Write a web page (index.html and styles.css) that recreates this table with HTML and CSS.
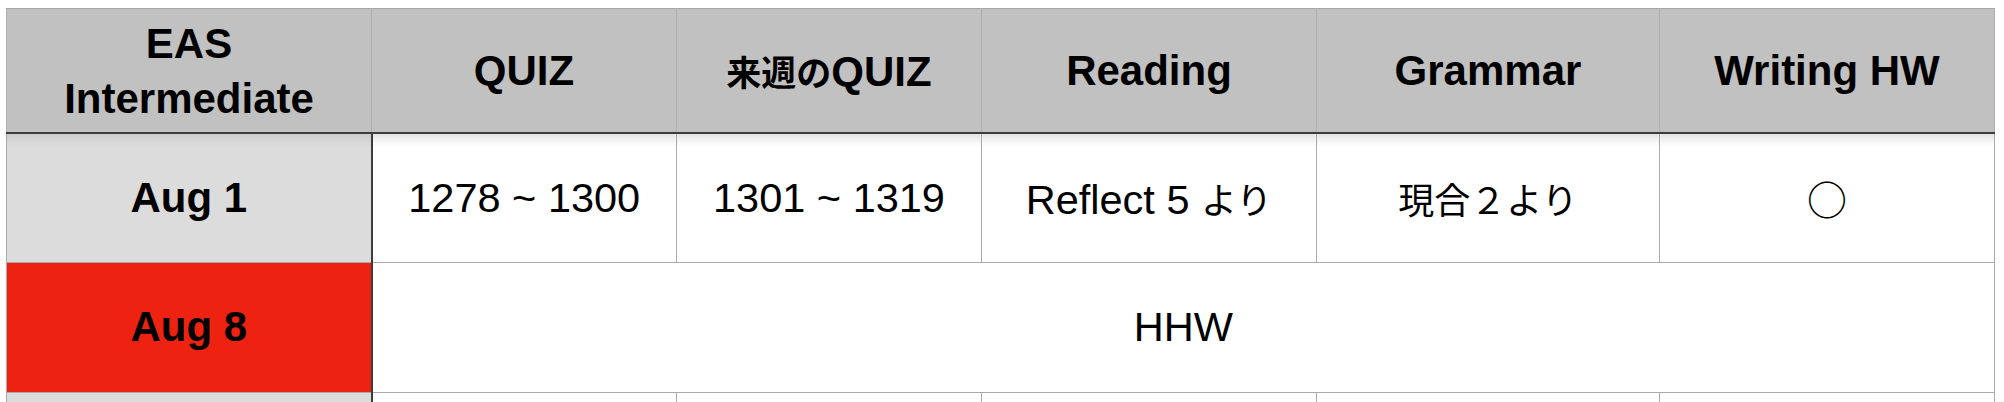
FILE: index.html
```html
<!DOCTYPE html>
<html lang="ja">
<head>
<meta charset="utf-8">
<title>EAS Intermediate</title>
<link rel="stylesheet" href="styles.css">
</head>
<body>
<table class="sched">
  <colgroup>
    <col class="c1"><col class="c2"><col class="c3"><col class="c4"><col class="c5"><col class="c6">
  </colgroup>
  <thead>
    <tr>
      <th class="corner">EAS<br>Intermediate</th>
      <th>QUIZ</th>
      <th><span class="ja">来週の</span>QUIZ</th>
      <th>Reading</th>
      <th>Grammar</th>
      <th>Writing HW</th>
    </tr>
  </thead>
  <tbody>
    <tr class="r1">
      <th class="date gray">Aug 1</th>
      <td>1278 ~ 1300</td>
      <td>1301 ~ 1319</td>
      <td>Reflect 5 <span class="ja">より</span></td>
      <td><span class="ja">現合２より</span></td>
      <td><span class="ja mark">○</span></td>
    </tr>
    <tr class="r2">
      <th class="date red">Aug 8</th>
      <td colspan="5">HHW</td>
    </tr>
    <tr class="r3">
      <th class="date gray"></th>
      <td></td><td></td><td></td><td></td><td></td>
    </tr>
  </tbody>
</table>
</body>
</html>
```
FILE: styles.css
```css
html, body {
  margin: 0;
  background: #ffffff;
}
body {
  font-family: "Liberation Sans", "Noto Sans CJK JP", sans-serif;
  color: #000;
}
.sched {
  border-collapse: collapse;
  table-layout: fixed;
  margin: 8px 0 0 6px;
  width: 1989px;
}
.c1 { width: 365px; }
.c2 { width: 305px; }
.c3 { width: 305px; }
.c4 { width: 335px; }
.c5 { width: 343px; }
.c6 { width: 335px; }

.sched th,
.sched td {
  padding: 0;
  text-align: center;
  vertical-align: middle;
  border: 1px solid #a9a9a9;
}
.sched thead th {
  background: #c0c1c0;
  font-weight: bold;
  font-size: 42px;
  line-height: 55px;
  height: 123px;
  border-left-color: #adafad;
  border-right-color: #adafad;
  border-top-color: #a6a6a6;
  border-bottom: 2px solid #3c3c3c;
}
.sched thead .ja {
  font-family: "Noto Sans CJK JP", sans-serif;
  font-size: 35px;
  font-weight: bold;
}
.sched tbody th {
  font-weight: bold;
  font-size: 42px;
  border-right: 2px solid #3c3c3c;
}
.sched tbody td {
  font-size: 41.5px;
  background: #fff;
}
.sched .r1 { height: 129px; }
.sched .r2 { height: 130px; }
.sched .r3 { height: 130px; }
.sched .r1 td {
  background: linear-gradient(to bottom, rgba(0,0,0,0.10), rgba(0,0,0,0) 12px), #fff;
}
.sched .r1 th.gray {
  background: linear-gradient(to bottom, rgba(0,0,0,0.08), rgba(0,0,0,0) 12px), #dcdcdc;
}
.gray { background: #dcdcdc; }
.red { background: #ed2210; }
.ja {
  font-family: "Noto Sans CJK JP", sans-serif;
  font-size: 36px;
}
.mark {
  font-size: 40px;
}
```
